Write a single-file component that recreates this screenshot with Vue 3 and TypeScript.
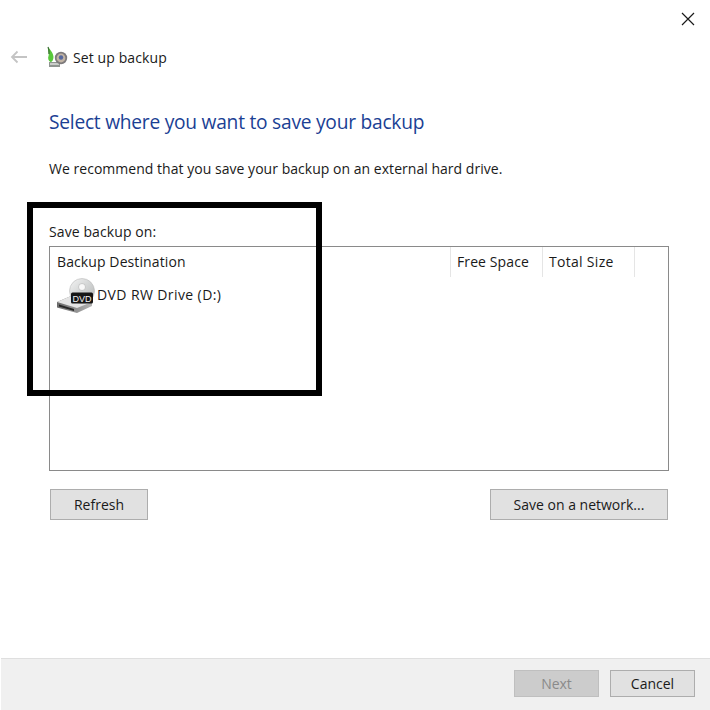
<script setup lang="ts">
const columns = [
  { label: 'Backup Destination', cls: 'col-dest' },
  { label: 'Free Space', cls: 'col-free' },
  { label: 'Total Size', cls: 'col-total' },
]
</script>

<template>
  <div class="window">
    <div class="titlebar">
      <svg class="close" width="14" height="14" viewBox="0 0 14 14">
        <path d="M1 1 L13 13 M13 1 L1 13" stroke="#1a1a1a" stroke-width="1.2" fill="none" />
      </svg>
    </div>
    <div class="nav">
      <svg class="back" width="18" height="14" viewBox="0 0 18 14">
        <path d="M17 7 H2 M7.5 1.5 L2 7 L7.5 12.5" stroke="#c4c4c4" stroke-width="1.8" fill="none" />
      </svg>
      <svg class="app-icon" width="22" height="22" viewBox="0 0 22 22">
        <path d="M3 21 L3 16 H14 V21 Z" fill="#8f9490" />
        <path d="M4 17 H13 V19 H4 Z" fill="#c9ccc8" />
        <path d="M2 1 C3.500 3 7.500 7 7.500 11 C7.500 14 6 16 4.500 16 C2.500 15 1.500 12.500 2.500 10 C3.500 8 1.500 4 2 1 Z" fill="#58c83a" />
        <path d="M2 1 C3 3 3.500 5 3 8" stroke="#3c6b35" stroke-width="1.200" fill="none" />
        <circle cx="15" cy="12" r="6.200" fill="#7d7a7c" />
        <circle cx="15" cy="12" r="4.400" fill="#c2b4a4" />
        <circle cx="15" cy="11.500" r="2.200" fill="#56689e" />
      </svg>
      <span>Set up backup</span>
    </div>

    <main class="content">
      <h1 class="heading">Select where you want to save your backup</h1>
      <p class="recommend">We recommend that you save your backup on an external hard drive.</p>
      <div class="list-label">Save backup on:</div>
      <div class="list">
        <div class="list-head">
          <div v-for="c in columns" :key="c.label" class="col" :class="c.cls">{{ c.label }}</div>
        </div>
        <div class="row">
          <svg class="dvd" width="40" height="36" viewBox="0 0 40 36">
            <defs>
              <linearGradient id="disc" x1="0" y1="0" x2="1" y2="1">
                <stop offset="0" stop-color="#f4f4f4" />
                <stop offset="0.500" stop-color="#d2d4d4" />
                <stop offset="1" stop-color="#b4b6b6" />
              </linearGradient>
              <linearGradient id="body" x1="0" y1="0" x2="1" y2="0">
                <stop offset="0" stop-color="#6a6a6a" />
                <stop offset="1" stop-color="#b4b4b4" />
              </linearGradient>
            </defs>
            <path d="M1 24 L15 18 L36 24 L36 28 L21 35 L1 29.500 Z" fill="url(#body)" />
            <path d="M1 24 L15 18 L36 24 L21 30 Z" fill="#e4e4e4" />
            <path d="M3 26.500 L18 31 L18 33 L3 28.500 Z" fill="#262626" />
            <circle cx="26" cy="13" r="12.500" fill="url(#disc)" stroke="#b0b0b0" stroke-width="0.500" />
            <circle cx="26" cy="9" r="3.500" fill="#f8f8f8" stroke="#a5a5a5" stroke-width="0.500" />
            <rect x="15" y="14.500" width="22" height="11" rx="1.500" fill="#161616" />
            <text x="26" y="23.500" text-anchor="middle" class="dvd-text">DVD</text>
          </svg>
          <span class="row-label">DVD RW Drive (D:)</span>
        </div>
      </div>
      <div class="actions">
        <button class="btn btn-refresh" type="button">Refresh</button>
        <button class="btn btn-network" type="button">Save on a network...</button>
      </div>
    </main>

    <footer class="footer">
      <button class="btn btn-foot btn-disabled" type="button" disabled>Next</button>
      <button class="btn btn-foot" type="button">Cancel</button>
    </footer>

    <div class="annotation"></div>
  </div>
</template>

<style>
html, body { margin: 0; background: #fff; }
</style>

<style scoped>
.window {
  position: relative;
  width: 710px;
  height: 710px;
  box-sizing: border-box;
  display: flex;
  flex-direction: column;
  background: #fff;
  overflow: hidden;
  font-family: "Open Sans", "Noto Sans", sans-serif;
  font-size: 14px;
  color: #1a1a1a;
}
.titlebar {
  height: 43px;
  display: flex;
  justify-content: flex-end;
  align-items: flex-start;
  padding: 12px 15px 0 0;
  box-sizing: border-box;
}
.nav {
  height: 28px;
  display: flex;
  align-items: center;
  padding-left: 10px;
  letter-spacing: 0.1px;
}
.back { margin-right: 18px; }
.app-icon { margin-right: 5px; }
.content {
  flex: 1;
  display: flex;
  flex-direction: column;
  padding: 0 41px 0 49px;
}
.heading {
  margin: 36px 0 0;
  height: 29px;
  font-size: 19.200px;
  line-height: 29px;
  font-weight: 400;
  color: #1b3f94;
  letter-spacing: -0.25px;
}
.recommend {
  margin: 23px 0 0;
  line-height: 20px;
  letter-spacing: 0.03px;
}
.list-label {
  margin-top: 43px;
  height: 20px;
  line-height: 20px;
  letter-spacing: 0.1px;
}
.list {
  margin-top: 4px;
  width: 620px;
  height: 225px;
  box-sizing: border-box;
  border: 1px solid #8a8a8a;
}
.list-head {
  display: flex;
  height: 30px;
  line-height: 29px;
}
.col {
  box-sizing: border-box;
  border-right: 1px solid #e5e5e5;
  letter-spacing: 0.1px;
}
.col-dest { width: 401px; padding-left: 7px; }
.col-free { width: 92px; padding-left: 6px; }
.col-total { width: 92px; padding-left: 6px; letter-spacing: 0.3px; }
.row {
  display: flex;
  align-items: flex-start;
  padding: 1px 0 0 6px;
}
.dvd { margin-right: 1px; }
.dvd-text {
  font-family: "Liberation Sans", sans-serif;
  font-size: 9px;
  fill: #f2f2f2;
}
.row-label {
  line-height: 20px;
  margin-top: 7px;
  letter-spacing: 0.4px;
}
.actions {
  margin-top: 18px;
  margin-left: 1px;
  width: 618px;
  display: flex;
  justify-content: space-between;
}
.btn {
  font-family: inherit;
  font-size: 14px;
  color: #1a1a1a;
  background: #e1e1e1;
  border: 1px solid #adadad;
  padding: 0;
  box-sizing: border-box;
}
.btn-refresh { width: 98px; height: 31px; }
.btn-network { width: 178px; height: 31px; }
.footer {
  height: 52px;
  margin: 0 0 0 1px;
  box-sizing: border-box;
  background: #f0f0f0;
  border-top: 1px solid #dfdfdf;
  display: flex;
  justify-content: flex-end;
  align-items: flex-start;
  gap: 11px;
  padding: 11px 15px 0 0;
}
.btn-foot { width: 85px; height: 27px; }
.btn-disabled {
  background: #cccccc;
  border-color: #bfbfbf;
  color: #8a8a8a;
}
.annotation {
  position: absolute;
  left: 27px;
  top: 202px;
  width: 295px;
  height: 194px;
  box-sizing: border-box;
  border: 6px solid #000;
  pointer-events: none;
}
</style>
